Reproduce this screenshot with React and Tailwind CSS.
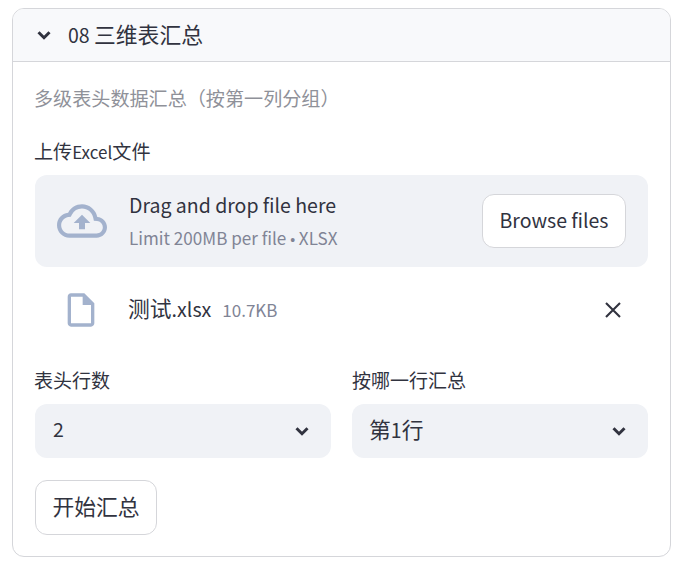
function Chevron({ className }) {
  return (
    <svg className={className} viewBox="0 0 24 24" fill="none" stroke="currentColor" strokeWidth="3" width="24" height="24">
      <path d="M6.5 9.2 12 14.7l5.5-5.5" />
    </svg>
  );
}

function Select({ label, labelClass = "", children }) {
  return (
    <div className="flex w-[296px] flex-col">
      <div className={"h-[24px] text-[19px] leading-[24px] text-[#31333f] " + labelClass}>{label}</div>
      <div className="mt-[12px] flex h-[54px] items-center justify-between rounded-xl bg-[#f0f2f6] pl-[17px] pr-[17px] text-[19.5px] leading-[30px] text-[#31333f]">
        <span className="pb-[4px]">{children}</span>
        <Chevron className="text-[#31333f]" />
      </div>
    </div>
  );
}

const big = "text-[21.8px]";

export default function App() {
  return (
    <div className="h-[570px] w-[684px] bg-white pl-3 pt-2 font-['Noto_Sans_CJK_SC',sans-serif] text-[#31333f]">
      <div className="h-[549px] w-[659px] overflow-hidden rounded-xl border border-[#d5d6da]">
        <div className="flex h-[53px] items-center border-b border-[#d5d6da] bg-[#f8f9fb] pl-[19px]">
          <Chevron className="h-[24px] w-[24px]" />
          <span className="ml-[12px] pb-[2px] text-[19.5px] leading-[28px]">08 <span className={big}>三维表汇总</span></span>
        </div>
        <div className="px-[22px]">
          <div className="-ml-[1px] mt-[22px] h-[28px] text-[19.1px] leading-[28px] text-[#8f9199]">多级表头数据汇总（按第一列分组）</div>
          <div className="-ml-[1px] mt-[27px] h-[24px] text-[19.1px] leading-[24px]">上传<span className="text-[17px]">Excel</span>文件</div>
          <div className="mt-[12px] flex h-[92px] items-center rounded-xl bg-[#f0f2f6] pl-[22px] pr-[22px]">
            <svg width="50" height="50" viewBox="0 0 24 24" fill="#a3b2cd">
              <path d="M19.35 10.04A7.49 7.49 0 0 0 12 4C9.11 4 6.6 5.64 5.35 8.04A5.994 5.994 0 0 0 0 14c0 3.31 2.69 6 6 6h13c2.76 0 5-2.24 5-5 0-2.64-2.05-4.78-4.65-4.96zM19 18H6c-2.21 0-4-1.79-4-4 0-2.05 1.53-3.76 3.56-3.97l1.07-.11.5-.95A5.469 5.469 0 0 1 12 6c2.62 0 4.88 1.86 5.39 4.43l.3 1.5 1.53.11A2.98 2.98 0 0 1 22 15c0 1.65-1.35 3-3 3zM8 13h2.55v3h2.9v-3H16l-4-4z" />
            </svg>
            <div className="ml-[22px] flex flex-col pb-[4px]">
              <span className="text-[19.5px] leading-[30px]">Drag and drop file here</span>
              <span className="mt-[4px] h-[24px] pt-[2px] text-[17.1px] leading-[24px] text-[#808495]">Limit 200MB per file <span className="font-['Liberation_Sans',sans-serif] text-[14px]">•</span> XLSX</span>
            </div>
            <button className="ml-auto h-[54px] w-[144px] rounded-xl border border-[#d5d6da] bg-white pb-[2px] text-[19.5px] text-[#31333f]">Browse files</button>
          </div>
          <div className="mt-[16px] flex h-[54px] items-center pl-[26px] pr-[23px]">
            <svg width="40" height="40" viewBox="0 0 24 24" fill="#a3b2cd">
              <path d="M14 2H6c-1.1 0-1.99.9-1.99 2L4 20c0 1.1.89 2 1.99 2H18c1.1 0 2-.9 2-2V8l-6-6zM6 20V4h7v5h5v11H6z" />
            </svg>
            <span className="ml-[27px] pb-[4px] text-[19.6px] leading-[30px]"><span className={big}>测试</span>.xlsx</span>
            <span className="ml-[11px] pb-[1px] text-[17px] text-[#808495]">10.7KB</span>
            <svg className="ml-auto" width="24" height="24" viewBox="0 0 24 24" fill="none" stroke="#31333f" strokeWidth="2.1">
              <path d="M5 5l14 14M19 5L5 19" />
            </svg>
          </div>
          <div className="mt-[31px] flex gap-[21px]">
            <Select label="表头行数" labelClass="-ml-[1px]"><span className="ml-[1px]">2</span></Select>
            <Select label="按哪一行汇总"><span className={big}>第</span>1<span className={big}>行</span></Select>
          </div>
          <button className={"mt-[22px] h-[55px] w-[122px] rounded-xl border border-[#d5d6da] bg-white pb-[2px] text-[#31333f] " + big}>开始汇总</button>
        </div>
      </div>
    </div>
  );
}
